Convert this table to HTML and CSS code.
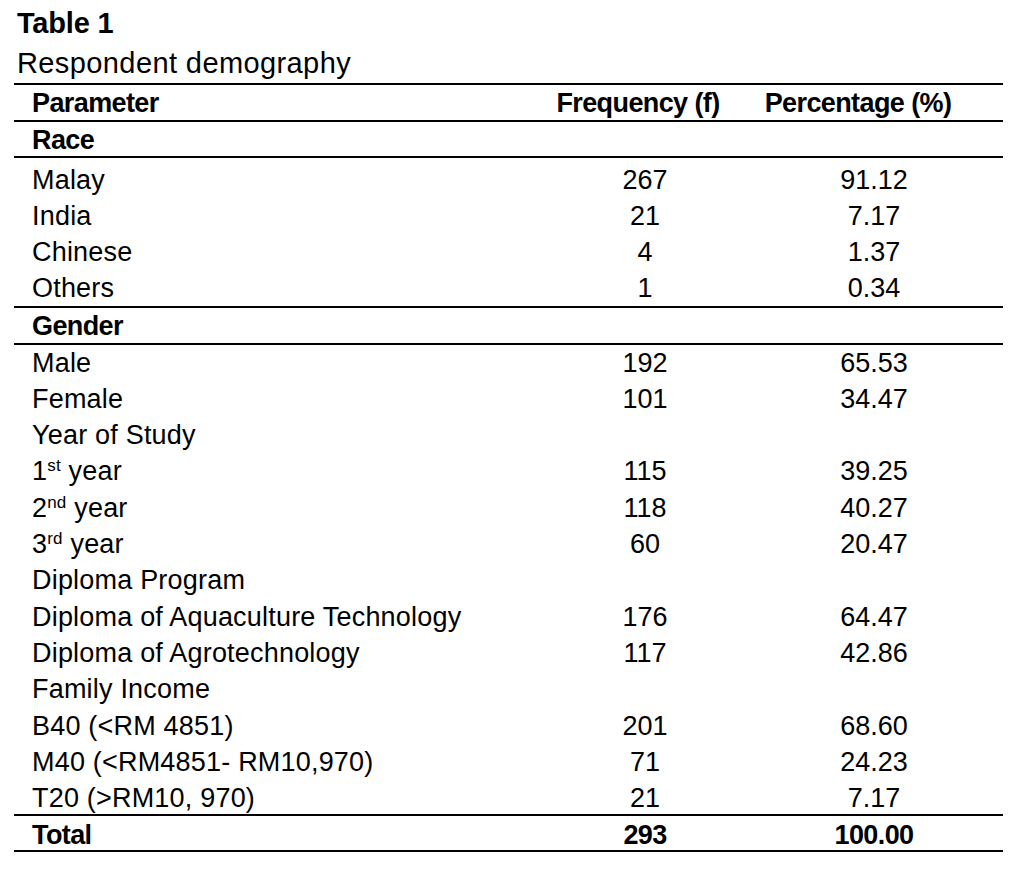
FILE: index.html
```html
<!DOCTYPE html>
<html lang="en">
<head>
<meta charset="utf-8">
<title>Table 1 Respondent demography</title>
<link rel="stylesheet" href="styles.css">
</head>
<body>
<div class="page">
  <div class="caption">
    <div class="caption-num">Table 1</div>
    <div class="caption-title">Respondent demography</div>
  </div>
  <div class="table">
    <div class="row head ruled">
      <div class="c1">Parameter</div>
      <div class="c2">Frequency (f)</div>
      <div class="c3">Percentage (%)</div>
    </div>
    <div class="row bold ruled"><div class="c1">Race</div><div class="c2"></div><div class="c3"></div></div>
    <div class="row sec-first"><div class="c1">Malay</div><div class="c2">267</div><div class="c3">91.12</div></div>
    <div class="row sec-mid"><div class="c1">India</div><div class="c2">21</div><div class="c3">7.17</div></div>
    <div class="row sec-mid"><div class="c1">Chinese</div><div class="c2">4</div><div class="c3">1.37</div></div>
    <div class="row sec-last ruled"><div class="c1">Others</div><div class="c2">1</div><div class="c3">0.34</div></div>
    <div class="row bold ruled"><div class="c1">Gender</div><div class="c2"></div><div class="c3"></div></div>
    <div class="row"><div class="c1">Male</div><div class="c2">192</div><div class="c3">65.53</div></div>
    <div class="row"><div class="c1">Female</div><div class="c2">101</div><div class="c3">34.47</div></div>
    <div class="row"><div class="c1">Year of Study</div><div class="c2"></div><div class="c3"></div></div>
    <div class="row"><div class="c1">1<sup>st</sup> year</div><div class="c2">115</div><div class="c3">39.25</div></div>
    <div class="row"><div class="c1">2<sup>nd</sup> year</div><div class="c2">118</div><div class="c3">40.27</div></div>
    <div class="row"><div class="c1">3<sup>rd</sup> year</div><div class="c2">60</div><div class="c3">20.47</div></div>
    <div class="row"><div class="c1">Diploma Program</div><div class="c2"></div><div class="c3"></div></div>
    <div class="row"><div class="c1">Diploma of Aquaculture Technology</div><div class="c2">176</div><div class="c3">64.47</div></div>
    <div class="row"><div class="c1">Diploma of Agrotechnology</div><div class="c2">117</div><div class="c3">42.86</div></div>
    <div class="row"><div class="c1">Family Income</div><div class="c2"></div><div class="c3"></div></div>
    <div class="row"><div class="c1">B40 (&lt;RM 4851)</div><div class="c2">201</div><div class="c3">68.60</div></div>
    <div class="row"><div class="c1">M40 (&lt;RM4851- RM10,970)</div><div class="c2">71</div><div class="c3">24.23</div></div>
    <div class="row ruled"><div class="c1">T20 (&gt;RM10, 970)</div><div class="c2">21</div><div class="c3">7.17</div></div>
    <div class="row bold ruled total"><div class="c1">Total</div><div class="c2">293</div><div class="c3">100.00</div></div>
  </div>
</div>
</body>
</html>
```

FILE: styles.css
```css
html, body {
  margin: 0;
  padding: 0;
  background: #ffffff;
}

body {
  font-family: "Liberation Sans", Arial, sans-serif;
  font-size: 27px;
  color: #000000;
}

.page {
  width: 989px;
  padding: 3px 0 0 14px;
}

.caption {
  padding-left: 3px;
  font-size: 29px;
  line-height: 40px;
}

.caption-num {
  font-weight: bold;
  letter-spacing: -0.2px;
}

.caption-title {
  letter-spacing: 0.4px;
}

.table {
  border-top: 2px solid #000000;
}

.row {
  display: grid;
  grid-template-columns: 531px 200px 258px;
  height: 36.3px;
  line-height: 36px;
  box-sizing: border-box;
  white-space: nowrap;
}

.row.sec-first {
  height: 40px;
  padding-top: 4px;
}

.row.sec-mid {
  height: 36px;
}

.row.sec-last {
  height: 38px;
}

.row.head {
  height: 37px;
}

.row.total {
  height: 36px;
  padding-top: 1px;
}

.row.ruled {
  border-bottom: 2px solid #000000;
}

.c1 {
  padding-left: 18px;
  letter-spacing: 0.2px;
}

.c2, .c3 {
  text-align: center;
}

.bold {
  font-weight: bold;
  letter-spacing: -0.6px;
}

.bold .c1 {
  letter-spacing: -0.6px;
}

.head {
  font-weight: bold;
  letter-spacing: -0.6px;
}

.head .c1 {
  letter-spacing: -0.6px;
}

.head .c2 {
  padding-right: 14px;
}

.head .c3 {
  padding-right: 32px;
}

sup {
  font-size: 17px;
  line-height: 0;
  vertical-align: 9px;
}
```
